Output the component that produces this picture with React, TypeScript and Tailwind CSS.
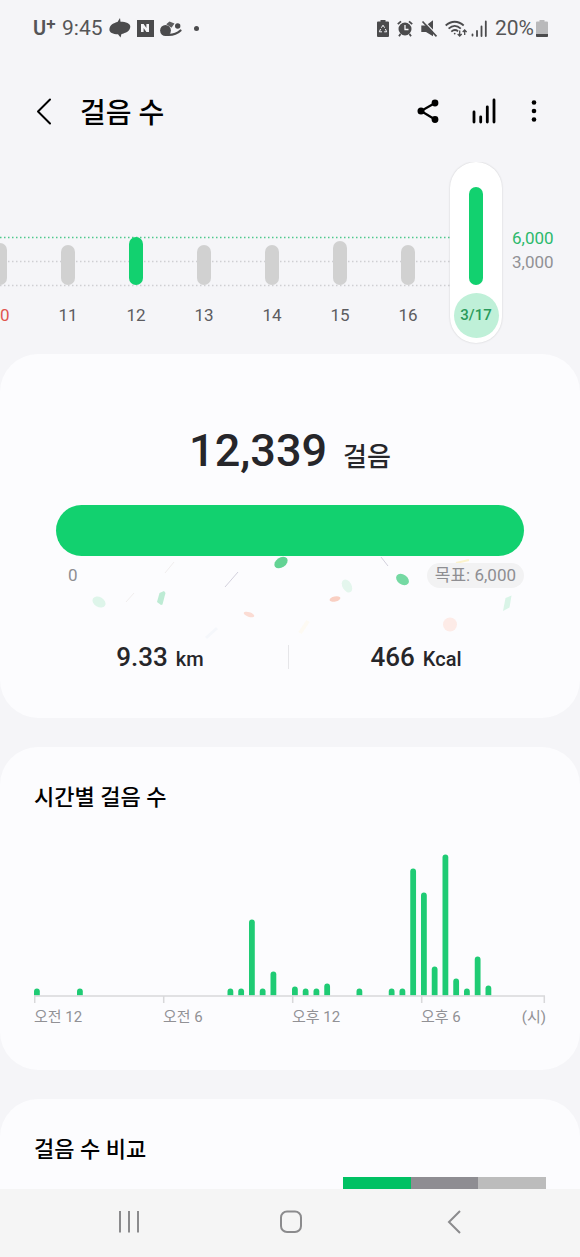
import React from "react";

const DAYS = [
  { label: "10", height: 42, holiday: true },
  { label: "11", height: 40 },
  { label: "12", height: 48, reached: true },
  { label: "13", height: 40 },
  { label: "14", height: 40 },
  { label: "15", height: 44 },
  { label: "16", height: 40 },
  { label: "3/17", height: 98, reached: true, selected: true },
];

// Half-hour slots: [slot index, bar height]
const SLOTS: [number, number][] = [
  [0, 7], [4, 7], [18, 7], [19, 7], [20, 76], [21, 7], [22, 24], [24, 9],
  [25, 7], [26, 7], [27, 12], [30, 7], [33, 7], [34, 7], [35, 127], [36, 103],
  [37, 29], [38, 141], [39, 17], [40, 7], [41, 39], [42, 10],
];

function StatusBar() {
  return (
    <div className="flex h-14 shrink-0 items-center justify-between pr-8 pl-[33px] text-[21px] leading-6 text-[#555557]">
      <div className="flex items-center">
        <span className="flex w-[29px] items-start text-[20px] font-semibold leading-6">
          U<span className="text-[17px] leading-4">+</span>
        </span>
        <span>9:45</span>
        <svg className="ml-1.5 h-5 w-[22px] shrink-0" viewBox="0 0 22 20" fill="#4b4b4d" aria-hidden="true">
          <path d="M11 0 11.500 3.700C17 3.800 21.300 5.500 21.300 8.500 21.300 13 16.500 15.200 12.500 16L11.500 19.500 9 16.300C4 16 .4 14.800 .4 11.500 .4 7 5 4.800 8.500 4z" />
        </svg>
        <span className="ml-1.5 flex size-[17px] items-center justify-center bg-[#4b4b4d]">
          <svg className="h-2 w-2" viewBox="0 0 8 8" fill="#f5f5f8" aria-hidden="true">
            <path d="M0 0h2.600l2.800 4V0H8v8H5.400L2.600 4v4H0z" />
          </svg>
        </span>
        <svg className="ml-1.5 h-[17px] w-[22px] shrink-0" viewBox="0 0 22 17" aria-hidden="true">
          <ellipse cx="5.500" cy="10.500" rx="5.400" ry="5.500" fill="#4b4b4d" />
          <path d="M6.200 4.300 9.500 1.500 14.500 3.500 11.500 7.800z" fill="#5e5e60" />
          <circle cx="17.700" cy="6" r="2.700" fill="#4b4b4d" />
          <path d="M6 14.800c6 .6 11-.8 14.500-4.300" fill="none" stroke="#4b4b4d" strokeWidth="2.200" strokeLinecap="round" />
        </svg>
        <span className="ml-3 size-[5px] rounded-full bg-[#4b4b4d]" />
      </div>
      <div className="flex items-center">
        <svg className="h-[17px] w-3" viewBox="0 0 12 17" aria-hidden="true">
          <path d="M3.500 0h5v1.500H11q1 0 1 1V16q0 1-1 1H1q-1 0-1-1V2.500q0-1 1-1h2.500z" fill="#4b4b4d" />
          <path d="m4.400 7.700 1.600-2.500 1.600 2.500M8.400 9l1.300 2.800H7.200M5 11.800H2.300L3.600 9" fill="none" stroke="#f5f5f8" strokeWidth="1" />
        </svg>
        <svg className="ml-2 h-[17px] w-4" viewBox="0 0 16 17" aria-hidden="true">
          <circle cx="8" cy="9" r="6.500" fill="#4b4b4d" />
          <path d="M.8 4.200 4 1.300M15.200 4.200 12 1.300M3.500 14l-1.500 2.200M12.500 14l1.500 2.200" stroke="#4b4b4d" strokeWidth="1.800" />
          <path d="M8 5v4.500h3.500" fill="none" stroke="#f5f5f8" strokeWidth="1.300" />
        </svg>
        <svg className="ml-2 h-[17px] w-[17px]" viewBox="0 0 17 17" aria-hidden="true">
          <path d="M.3 5.500h4.700L12 .3v16L5 12H.3z" fill="#4b4b4d" />
          <path d="m2.500.8 14 14.500" stroke="#f5f5f8" strokeWidth="1.300" />
          <path d="m1.500 1.500 14 14.800" stroke="#4b4b4d" strokeWidth="1.700" />
        </svg>
        <svg className="ml-[7px] h-[17px] w-[22px]" viewBox="0 0 22 17" fill="none" stroke="#4b4b4d" aria-hidden="true">
          <path d="M.7 5.500c5.500-5 12.500-5 18 0M3.600 8.700c4-3.600 8.300-3.600 12.200 0M6.300 11.600c2.300-2 4.600-2 6.800-.4" strokeWidth="1.800" />
          <circle cx="9.700" cy="13.600" r=".9" fill="#4b4b4d" stroke="none" />
          <path d="M14.700 10.500v5.500m-2-2 2 2 2-2M19.700 15v-5m-2 2 2-2 2 2" strokeWidth="1.300" />
        </svg>
        <svg className="ml-1 h-[17px] w-4" viewBox="0 0 16 17" stroke="#4b4b4d" strokeWidth="1.800" strokeLinecap="round" aria-hidden="true">
          <path d="M1.500 14.500v1M6 11v5M10.500 6.500V16M14.800 1.500V16" />
        </svg>
        <span className="ml-2">20%</span>
        <svg className="ml-0.5 h-[17px] w-3" viewBox="0 0 12 17" aria-hidden="true">
          <path d="M3.500 0h5v1.500H11q1 0 1 1V16q0 1-1 1H1q-1 0-1-1V2.500q0-1 1-1h2.500z" fill="#b9b9bb" />
          <path d="M0 14h12v2q0 1-1 1H1q-1 0-1-1z" fill="#4b4b4d" />
        </svg>
      </div>
    </div>
  );
}

function Header() {
  return (
    <header className="flex h-[106px] shrink-0 items-center pr-9 pt-1 pl-[34px]">
      <button type="button" aria-label="뒤로" className="flex h-12 w-5 items-center justify-center">
        <svg className="h-7 w-5" viewBox="0 0 20 28" fill="none" stroke="#000" strokeWidth="2" strokeLinecap="round" strokeLinejoin="round">
          <path d="M16 2.500 4 14.500 16 26.500" />
        </svg>
      </button>
      <h1 className="ml-[26px] pt-1.5 text-[28px] font-medium leading-9 text-black">걸음 수</h1>
      <div className="ml-auto flex items-center">
        <button type="button" aria-label="공유" className="flex h-12 w-6 items-center justify-center">
          <svg className="h-6 w-6" viewBox="0 0 24 24">
            <path d="M19 4 5 12l14 8.500" fill="none" stroke="#000" strokeWidth="2.200" />
            <circle cx="19" cy="4" r="3.400" />
            <circle cx="5" cy="12" r="3.500" />
            <circle cx="19" cy="20.500" r="3.400" />
          </svg>
        </button>
        <button type="button" aria-label="통계" className="ml-8 flex h-12 w-6 items-center justify-center">
          <svg className="h-[26px] w-6" viewBox="0 0 24 26" stroke="#000" strokeWidth="2.800" strokeLinecap="round">
            <path d="M2 14v10M8.700 18.800V24M15.300 8.800V24M22 2v22" />
          </svg>
        </button>
        <button type="button" aria-label="더보기" className="ml-7 flex h-12 w-5 items-center justify-center">
          <svg className="h-6 w-2" viewBox="0 0 8 24">
            <circle cx="4" cy="3.500" r="2.300" />
            <circle cx="4" cy="12" r="2.300" />
            <circle cx="4" cy="20.500" r="2.300" />
          </svg>
        </button>
      </div>
    </header>
  );
}

function DailyChart() {
  return (
    <section aria-label="일별 걸음 수" className="relative flex h-48 shrink-0 items-start overflow-hidden">
      <svg className="absolute top-0 left-0 h-32 w-full" aria-hidden="true">
        <g strokeWidth="1.500" strokeDasharray="1.5 2.500">
          <line x1="0" y1="75.500" x2="78%" y2="75.500" stroke="#4fc98c" />
          <line x1="0" y1="99.500" x2="78%" y2="99.500" stroke="#cfcfd2" />
          <line x1="0" y1="123.500" x2="78%" y2="123.500" stroke="#cfcfd2" />
        </g>
      </svg>
      <ol className="relative -ml-[34px] grid flex-1 grid-cols-8 justify-items-center">
        {DAYS.map((d) => (
          <li
            key={d.label}
            className={
              "flex h-[181px] w-[52px] flex-col items-center rounded-full " +
              (d.selected ? "bg-white shadow-[0_0_2px_rgba(0,0,0,0.18)]" : "")
            }
          >
            <div className="flex h-[123px] items-end">
              <div
                className={"w-3.5 rounded-full " + (d.reached ? "bg-[#12d16f]" : "bg-[#d1d1d1]")}
                style={{ height: d.height }}
              />
            </div>
            <span
              className={
                "mt-2 flex size-[45px] items-center justify-center rounded-full " +
                (d.selected
                  ? "bg-[#bff0d8] text-[15px] font-medium text-[#2a9a5b]"
                  : d.holiday
                    ? "text-[17px] text-[#e0554f]"
                    : "text-[17px] text-[#5c5c60]")
              }
            >
              {d.label}
            </span>
          </li>
        ))}
      </ol>
      <div className="w-[70px] pt-16 pl-0.5 text-[17px] leading-6">
        <div className="text-[#2cb96c]">6,000</div>
        <div className="text-[#919195]">3,000</div>
      </div>
    </section>
  );
}

function Confetti() {
  return (
    <svg className="absolute top-[200px] left-1/2 h-[100px] w-[580px] -translate-x-1/2" viewBox="0 554 580 100" aria-hidden="true">
      <ellipse cx="281" cy="562.500" rx="7.300" ry="5" transform="rotate(-35 281 562.500)" fill="#63d394" />
      <ellipse cx="402.500" cy="579.500" rx="7" ry="5" transform="rotate(35 402.500 579.500)" fill="#75d9a3" />
      <ellipse cx="99" cy="602" rx="7" ry="5" transform="rotate(30 99 602)" fill="#def5ea" />
      <ellipse cx="347" cy="586" rx="7" ry="4.500" transform="rotate(60 347 586)" fill="#e4f6ed" />
      <ellipse cx="335" cy="599" rx="5.500" ry="2.500" transform="rotate(-12 335 599)" fill="#f9cfc2" />
      <ellipse cx="249" cy="614.500" rx="5.500" ry="2.300" transform="rotate(18 249 614.500)" fill="#fbdcd4" />
      <circle cx="450" cy="624.500" r="7" fill="#fdebe7" />
      <path d="m159.500 593 4.500-2 1.500 2-3 11.500-1.500.5-4-3z" fill="#bdebd4" />
      <path d="m505.500 598 6-2.500-2 12-6.500 3.500z" fill="#d9f4e7" />
      <path d="m225 587 13-15M381 557l7 9" stroke="#d3d1dd" fill="none" />
      <path d="m126 602 8-9M165 573l9-11" stroke="#f1eeee" fill="none" />
      <path d="m456 563 13-3" stroke="#fbf3cd" strokeWidth="2" />
      <path d="m206 638 11-10" stroke="#f5f7fb" strokeWidth="3" />
      <path d="m300 633 8-12" stroke="#fdfaf3" strokeWidth="4" />
    </svg>
  );
}

function SummaryCard() {
  return (
    <section className="relative h-[364px] shrink-0 rounded-[38px] bg-[#fcfcfe] text-[#26262a]">
      <div className="flex items-baseline justify-center gap-4 pt-[69px] leading-[56px]">
        <span className="text-[45px] font-medium">12,339</span>
        <span className="text-[26px] font-medium">걸음</span>
      </div>
      <Confetti />
      <div className="relative mx-14 mt-5">
        <div
          role="progressbar"
          aria-label="걸음 목표"
          aria-valuemin={0}
          aria-valuemax={6000}
          aria-valuenow={6000}
          className="h-[51px] rounded-full bg-[#12d16f]"
        />
        <div className="mt-[7px] flex items-center justify-between text-[17px] leading-[25px] text-[#8e8e92]">
          <span className="pl-3">0</span>
          <span className="rounded-full bg-[#f2f2f3] px-2">목표: 6,000</span>
        </div>
      </div>
      <div className="relative mr-9 ml-8 mt-[53px] grid grid-cols-2 text-[20px] font-medium leading-8">
        <div className="flex items-baseline justify-center gap-2">
          <span className="text-[26px]">9.33</span> km
        </div>
        <div className="flex items-baseline justify-center gap-2">
          <span className="text-[26px]">466</span> Kcal
        </div>
        <div className="absolute top-1 left-1/2 h-6 w-px bg-[#e6e6e9]" />
      </div>
    </section>
  );
}

function HourlyCard() {
  return (
    <section className="h-[323px] shrink-0 rounded-[38px] bg-[#fcfcfe] px-[34px] pt-[35px]">
      <h2 className="text-[22px] font-medium leading-8 text-black">시간별 걸음 수</h2>
      <svg className="mt-[39px] w-full" viewBox="0 0 512 150" role="img" aria-label="시간별 걸음 수 그래프">
        {SLOTS.map(([slot, h]) => {
          const x = 10.75 * slot;
          return (
            <path
              key={slot}
              d={`M${x} 142.500V${145.5 - h}a2.900 2.900 0 0 1 5.800 0V142.500z`}
              fill="#1fcb74"
            />
          );
        })}
        <path d="M0 143h511" stroke="#d8d8da" strokeWidth="1.500" />
        <path d="M.7 143v7M129.700 143v7M258.700 143v7M387.700 143v7M510.300 143v7" stroke="#d8d8da" strokeWidth="1.500" />
      </svg>
      <div className="mt-0.5 grid grid-cols-[129fr_129fr_129fr_125fr] text-[15px] leading-6 text-[#919195]">
        <span>오전 12</span>
        <span>오전 6</span>
        <span>오후 12</span>
        <span className="flex justify-between">
          <span>오후 6</span>
          <span>(시)</span>
        </span>
      </div>
    </section>
  );
}

function CompareCard() {
  return (
    <section className="shrink-0 rounded-t-[38px] bg-[#fcfcfe] px-[34px] pt-[35px]">
      <h2 className="text-[22px] font-medium leading-8 text-black">걸음 수 비교</h2>
      <div className="mt-[11px] ml-auto grid h-3 w-[203px] grid-cols-3">
        <div className="bg-[#00c163]" />
        <div className="bg-[#8e8d92]" />
        <div className="bg-[#bcbcbc]" />
      </div>
    </section>
  );
}

function NavBar() {
  return (
    <nav className="grid h-[68px] shrink-0 grid-cols-3 bg-[#f5f5f5] pr-[45px] pb-0.5 pl-12">
      <button type="button" aria-label="최근 앱" className="flex items-center justify-center">
        <svg className="h-6 w-6" viewBox="0 0 24 24" stroke="#8b8b8d" strokeWidth="2">
          <path d="M3 1v21.500M12 1v21.500M21 1v21.500" />
        </svg>
      </button>
      <button type="button" aria-label="홈" className="flex items-center justify-center">
        <svg className="h-6 w-6" viewBox="0 0 24 24" fill="none" stroke="#8b8b8d" strokeWidth="2">
          <rect x="2" y="1.500" width="20" height="20.500" rx="6" />
        </svg>
      </button>
      <button type="button" aria-label="뒤로 가기" className="flex items-center justify-center">
        <svg className="h-6 w-6" viewBox="0 0 24 24" fill="none" stroke="#8b8b8d" strokeWidth="2">
          <path d="M18 1 7 12l11 11" />
        </svg>
      </button>
    </nav>
  );
}

export default function App() {
  return (
    <div className="flex h-screen flex-col bg-[#f5f5f8] font-[Roboto,'Noto_Sans_CJK_KR',sans-serif]">
      <StatusBar />
      <Header />
      <main className="flex flex-1 flex-col overflow-y-auto [scrollbar-width:none]">
        <DailyChart />
        <div className="flex flex-col gap-[29px]">
          <SummaryCard />
          <HourlyCard />
          <CompareCard />
        </div>
      </main>
      <NavBar />
    </div>
  );
}
